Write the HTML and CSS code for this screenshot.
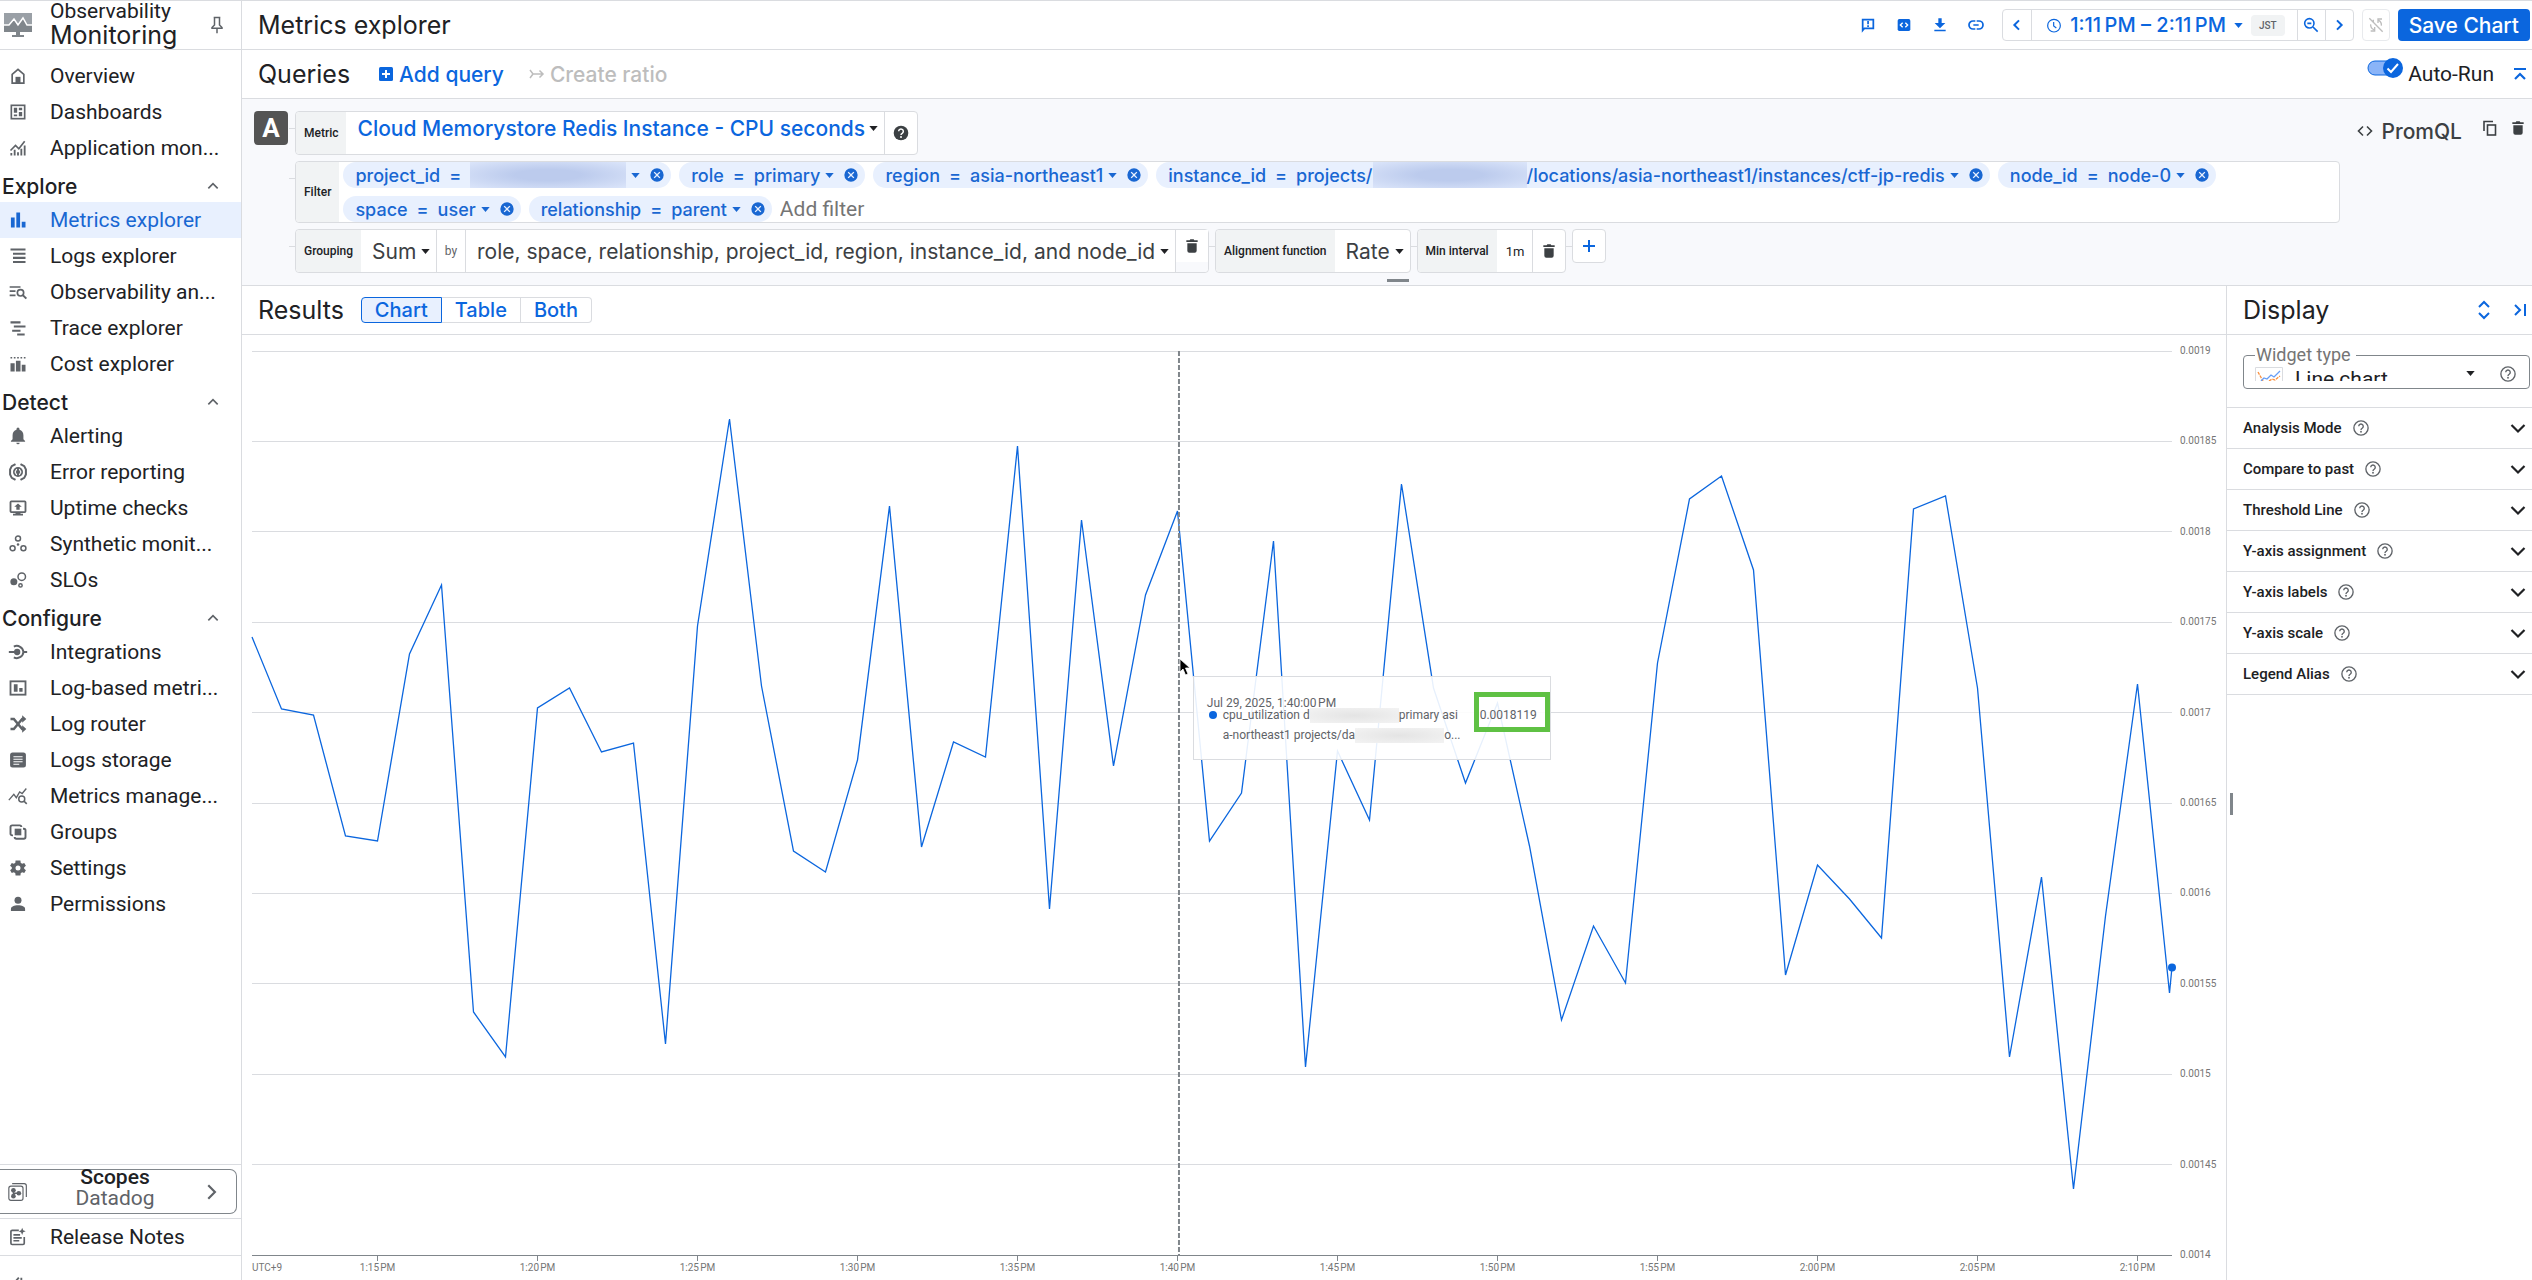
FILE: index.html
```html
<!DOCTYPE html>
<html lang="en">
<head>
    <meta charset="UTF-8">
    <meta name="viewport" content="width=device-width, initial-scale=1.0">
    <title>Metrics explorer - Monitoring</title>
    <link rel="stylesheet" href="styles.css">
</head>
<body>
    <!-- Shared icons -->
    <svg class="sprite" aria-hidden="true">
        <symbol id="i-caret" viewBox="0 0 10 6"><path d="M0 0h10L5 6z"/></symbol>
        <symbol id="i-up" viewBox="0 0 24 24"><path d="M5 15.500l7-7 7 7" fill="none" stroke="currentColor" stroke-width="2.500"/></symbol>
        <symbol id="i-down" viewBox="0 0 24 24"><path d="M5.500 9l6.500 6.500L18.500 9" fill="none" stroke="currentColor" stroke-width="2.200"/></symbol>
        <symbol id="i-left" viewBox="0 0 24 24"><path d="M15 5l-7 7 7 7" fill="none" stroke="currentColor" stroke-width="3"/></symbol>
        <symbol id="i-right" viewBox="0 0 24 24"><path d="M9 5l7 7-7 7" fill="none" stroke="currentColor" stroke-width="3"/></symbol>
        <symbol id="i-clear" viewBox="0 0 24 24"><path d="M12 2a10 10 0 1 0 0 20 10 10 0 0 0 0-20zm5 13.600L15.600 17 12 13.400 8.400 17 7 15.600l3.600-3.600L7 8.400 8.400 7l3.600 3.600L15.600 7 17 8.400 13.400 12z"/></symbol>
        <symbol id="i-trash" viewBox="0 0 24 24"><path d="M5 8h14v11a3 3 0 0 1-3 3H8a3 3 0 0 1-3-3zM15.500 3.500l-1-1.500h-5l-1 1.500H3.500V6h17V3.500z"/></symbol>
        <symbol id="i-help" viewBox="0 0 24 24"><circle cx="12" cy="12" r="9.500" fill="none" stroke="currentColor" stroke-width="1.800"/><path d="M9 9.800a3 3 0 1 1 4.600 2.500c-1 .7-1.600 1.200-1.600 2.300" fill="none" stroke="currentColor" stroke-width="1.800"/><circle cx="12" cy="17" r="1.200"/></symbol>
    </svg>

    <nav class="sidebar">
        <div class="sidebar-header">
            <svg class="product-icon" viewBox="0 0 28 26"><path d="M0 1h28v19H0z" fill="#9aa0a6"/><path d="M0 13h5l5-6 4 6 5-7 4 7h5v7H0z" fill="#80868b"/><path d="M0 13h5l5-6 4 6 5-7 4 7h5" fill="none" stroke="#fff" stroke-width="1.500"/><path d="M12 20h4v3h4v2H8v-2h4z" fill="#80868b"/></svg>
            <div class="product">
                <span class="product-parent">Observability</span>
                <span class="product-name">Monitoring</span>
            </div>
            <button class="icon-button pin" aria-label="Pin"><svg class="icon" viewBox="0 0 24 24"><path d="M8 3h8M9 3v9l-3 3v1h12v-1l-3-3V3M12 16v6" fill="none" stroke="currentColor" stroke-width="1.800"/></svg></button>
        </div>

        <div class="menu">
            <a class="menu-item" href="#"><svg class="icon" viewBox="0 0 24 24"><path d="M5 20.500V10l7-6 7 6v10.500z" fill="none" stroke="currentColor" stroke-width="2"/><path d="M9 13h6v8H9z"/></svg><span>Overview</span></a>
            <a class="menu-item" href="#"><svg class="icon" viewBox="0 0 24 24"><rect x="4" y="4" width="16" height="16" fill="none" stroke="currentColor" stroke-width="2"/><path d="M7 7h4v6H7zM13 7h4v3h-4zM13 12h4v5h-4zM7 15h4v2H7z"/></svg><span>Dashboards</span></a>
            <a class="menu-item" href="#"><svg class="icon" viewBox="0 0 24 24"><path d="M3 15l6-6 4 4 7-9" fill="none" stroke="currentColor" stroke-width="2"/><path d="M4 21v-3M8 21v-7M12 21v-4M16 21v-8M20 21V9" stroke="currentColor" stroke-width="2.200"/></svg><span>Application mon...</span></a>

            <div class="menu-heading"><span>Explore</span><svg class="icon-small" viewBox="0 0 24 24"><use href="#i-up"/></svg></div>
            <a class="menu-item active" href="#"><svg class="icon" viewBox="0 0 24 24"><path d="M3.500 9H8v12H3.500zM10 3h4.500v18H10zM16.500 14H21v7h-4.500z"/></svg><span>Metrics explorer</span></a>
            <a class="menu-item" href="#"><svg class="icon" viewBox="0 0 24 24"><path d="M3 3h18v2.500H3zM6 8h15v2.500H6zM6 13h15v2.500H6zM6 18h15v2.500H6z"/></svg><span>Logs explorer</span></a>
            <a class="menu-item" href="#"><svg class="icon" viewBox="0 0 24 24"><path d="M2 6h13M2 11h7M2 16h7" stroke="currentColor" stroke-width="2"/><circle cx="15" cy="13" r="3.800" fill="none" stroke="currentColor" stroke-width="2"/><path d="M17.500 15.500L22 20" stroke="currentColor" stroke-width="2.400"/></svg><span>Observability an...</span></a>
            <a class="menu-item" href="#"><svg class="icon" viewBox="0 0 24 24"><path d="M3 4h12v2.500H3zM7 9h14v2.500H7zM5 14h10v2.500H5zM11 18.500h9V21h-9z"/></svg><span>Trace explorer</span></a>
            <a class="menu-item" href="#"><svg class="icon" viewBox="0 0 24 24"><path d="M3 4.500h18" stroke="currentColor" stroke-width="2" stroke-dasharray="2 2"/><path d="M3 11h5v10H3zM9.500 8h5.500v13H9.500zM16.500 13H21v8h-4.500z"/></svg><span>Cost explorer</span></a>

            <div class="menu-heading"><span>Detect</span><svg class="icon-small" viewBox="0 0 24 24"><use href="#i-up"/></svg></div>
            <a class="menu-item" href="#"><svg class="icon" viewBox="0 0 24 24"><path d="M12 22a2 2 0 0 0 2-2h-4a2 2 0 0 0 2 2zm6.500-6v-5c0-3.200-1.700-5.800-4.700-6.500V3.600a1.800 1.800 0 0 0-3.600 0v.9C7.200 5.200 5.500 7.800 5.500 11v5L3.500 18v1h17v-1z"/></svg><span>Alerting</span></a>
            <a class="menu-item" href="#"><svg class="icon" viewBox="0 0 24 24"><path d="M9 2.500L4.500 5 2.500 9v6l2 4L9 21.500M15 2.500L19.500 5l2 4v6l-2 4-4.500 2.500" fill="none" stroke="currentColor" stroke-width="2.400"/><circle cx="12" cy="12" r="6"/><path d="M10.500 8.500L8.500 12l2 3.500M13.500 8.500l2 3.500-2 3.500" fill="none" stroke="#fff" stroke-width="1.300"/></svg><span>Error reporting</span></a>
            <a class="menu-item" href="#"><svg class="icon" viewBox="0 0 24 24"><rect x="3" y="4" width="18" height="13" rx="1" fill="none" stroke="currentColor" stroke-width="2.200"/><path d="M12 6.500l4.500 4H14V14h-4v-3.500H7.500zM9 17h6v2h3v2H6v-2h3z"/></svg><span>Uptime checks</span></a>
            <a class="menu-item" href="#"><svg class="icon" viewBox="0 0 24 24"><g fill="none" stroke="currentColor" stroke-width="1.800"><circle cx="12" cy="5.500" r="3"/><circle cx="5.500" cy="17" r="3"/><circle cx="18.500" cy="17" r="3"/></g><circle cx="12" cy="12.500" r="1.500"/></svg><span>Synthetic monit...</span></a>
            <a class="menu-item" href="#"><svg class="icon" viewBox="0 0 24 24"><circle cx="7" cy="14" r="4.200"/><g fill="none" stroke="currentColor" stroke-width="1.800"><circle cx="16.500" cy="8" r="4.500"/><circle cx="15" cy="18.500" r="2"/></g></svg><span>SLOs</span></a>

            <div class="menu-heading"><span>Configure</span><svg class="icon-small" viewBox="0 0 24 24"><use href="#i-up"/></svg></div>
            <a class="menu-item" href="#"><svg class="icon" viewBox="0 0 24 24"><circle cx="11" cy="12" r="3.800"/><path d="M1 12h8M19 12h4M7 5.500a8 8 0 0 1 11.500 6.500A8 8 0 0 1 7 18.500" fill="none" stroke="currentColor" stroke-width="2.400"/></svg><span>Integrations</span></a>
            <a class="menu-item" href="#"><svg class="icon" viewBox="0 0 24 24"><rect x="3" y="4" width="18" height="16" fill="none" stroke="currentColor" stroke-width="2.200"/><path d="M7 7.500h4.500v9H7zM13.500 12h4v4.500h-4z"/></svg><span>Log-based metri...</span></a>
            <a class="menu-item" href="#"><svg class="icon" viewBox="0 0 24 24"><path d="M3 6h4l10 12h2M3 18h4L17 6h2" fill="none" stroke="currentColor" stroke-width="3"/><path d="M17 1.500L22 6l-5 4.500zM17 13.500l5 4.500-5 4.500z"/></svg><span>Log router</span></a>
            <a class="menu-item" href="#"><svg class="icon" viewBox="0 0 24 24"><rect x="2.500" y="3" width="19" height="18" rx="3"/><path d="M6.500 8h11M6.500 11h11M6.500 14h11M6.500 17h7" stroke="#fff" stroke-width="1.300"/></svg><span>Logs storage</span></a>
            <a class="menu-item" href="#"><svg class="icon" viewBox="0 0 24 24"><path d="M1 17l6-7 3 4 4-7 3 2 5-6" fill="none" stroke="currentColor" stroke-width="1.600"/><circle cx="16.500" cy="15.500" r="3.600" fill="none" stroke="currentColor" stroke-width="1.800"/><path d="M19 18l3.500 3.500" stroke="currentColor" stroke-width="2"/></svg><span>Metrics manage...</span></a>
            <a class="menu-item" href="#"><svg class="icon" viewBox="0 0 24 24"><path d="M6 16H5a2 2 0 0 1-2-2V6a2 2 0 0 1 2-2h9a2 2 0 0 1 2 2M18 8h1a2 2 0 0 1 2 2v8a2 2 0 0 1-2 2h-9a2 2 0 0 1-2-2" fill="none" stroke="currentColor" stroke-width="2.300"/><path d="M8 8h8v8H8z"/></svg><span>Groups</span></a>
            <a class="menu-item" href="#"><svg class="icon" viewBox="0 0 24 24"><path d="M19.400 13a7.500 7.500 0 0 0 0-2l2.100-1.600-2-3.500-2.500 1a7.300 7.300 0 0 0-1.700-1L14.900 3H9.100l-.4 2.900a7.300 7.300 0 0 0-1.700 1l-2.500-1-2 3.500L4.600 11a7.500 7.500 0 0 0 0 2l-2.100 1.600 2 3.500 2.500-1c.5.4 1.100.7 1.700 1l.4 2.900h5.800l.4-2.900c.6-.3 1.200-.6 1.700-1l2.500 1 2-3.500zM12 15a3 3 0 1 1 0-6 3 3 0 0 1 0 6z"/></svg><span>Settings</span></a>
            <a class="menu-item" href="#"><svg class="icon" viewBox="0 0 24 24"><circle cx="12" cy="7.500" r="4.200"/><path d="M3.500 20.500V18c0-3 4-4.500 8.500-4.500s8.500 1.500 8.500 4.500v2.500z"/></svg><span>Permissions</span></a>
        </div>

        <div class="sidebar-footer">
            <button class="scopes">
                <svg class="icon" viewBox="0 0 24 24"><g fill="none" stroke="currentColor" stroke-width="1.400"><rect x="1" y="5" width="17" height="17" rx="2.500"/><path d="M5 2h14.500A2.500 2.500 0 0 1 22 4.500V18"/></g><circle cx="6.500" cy="10" r="2.800"/><circle cx="6.500" cy="17" r="2.800"/><circle cx="13" cy="13.500" r="2.800"/><path d="M6.500 10v7M6.500 13.500H13" stroke="currentColor" stroke-width="1.600"/></svg>
                <span class="scopes-text"><b>Scopes</b><span>Datadog</span></span>
                <svg class="icon" viewBox="0 0 24 24"><path d="M7.500 4l8 8-8 8" fill="none" stroke="currentColor" stroke-width="2.600"/></svg>
            </button>
            <a class="menu-item release" href="#"><svg class="icon" viewBox="0 0 24 24"><path d="M13 4H5a1.500 1.500 0 0 0-1.500 1.500v14A1.500 1.500 0 0 0 5 21h13a1.500 1.500 0 0 0 1.500-1.500V12M6.500 9.500h8M6.500 13h10M6.500 16.500h7" fill="none" stroke="currentColor" stroke-width="2"/><path d="M17 1l1.200 3 3 1.200-3 1.200L17 9.500l-1.200-3-3-1.300 3-1.200z"/></svg><span>Release Notes</span></a>
            <button class="collapse" aria-label="Collapse menu"><svg class="icon" viewBox="0 0 24 24"><path d="M13 2l-8 9 8 9M16 2v18" fill="none" stroke="currentColor" stroke-width="2.200"/></svg></button>
        </div>
    </nav>

    <main class="main">
        <header class="bar page-header">
            <h1 class="title">Metrics explorer</h1>
            <div class="header-actions">
                <button class="icon-button blue" aria-label="Send feedback"><svg class="icon" viewBox="0 0 24 24"><path d="M4 20V4h16v13H6.500z" fill="none" stroke="currentColor" stroke-width="2.600"/><path d="M10.800 6h2.600v5h-2.600zM10.800 12.500h2.600V15h-2.600z"/></svg></button>
                <button class="icon-button blue" aria-label="Code"><svg class="icon" viewBox="0 0 24 24"><rect x="2.500" y="3" width="19" height="18" rx="2.500"/><path d="M10 8.500L6.500 12l3.500 3.500M14 8.500l3.500 3.500-3.500 3.500" fill="none" stroke="#fff" stroke-width="2"/></svg></button>
                <button class="icon-button blue" aria-label="Download"><svg class="icon" viewBox="0 0 24 24"><path d="M9.500 2h5v7H20l-8 8-8-8h5.500zM3.500 19h17v2.500h-17z"/></svg></button>
                <button class="icon-button blue" aria-label="Copy link"><svg class="icon" viewBox="0 0 24 24"><path d="M11 6H7.500a6 6 0 0 0 0 12H11M13 6h3.500a6 6 0 0 1 0 12H13M8 12h8" fill="none" stroke="currentColor" stroke-width="2.600"/></svg></button>
                <div class="time-range">
                    <button class="time-step" aria-label="Previous"><svg class="icon-small" viewBox="0 0 24 24"><use href="#i-left"/></svg></button>
                    <button class="time-value">
                        <svg class="icon-small" viewBox="0 0 24 24"><circle cx="12" cy="13" r="9.500" fill="none" stroke="currentColor" stroke-width="1.800"/><path d="M11.500 7.500v6l4 3" fill="none" stroke="currentColor" stroke-width="1.800"/></svg>
                        <span>1:11&#8239;PM – 2:11&#8239;PM</span>
                        <svg class="caret"><use href="#i-caret"/></svg>
                        <span class="zone">JST</span>
                    </button>
                    <button class="time-step" aria-label="Zoom out"><svg class="icon-small" viewBox="0 0 24 24"><circle cx="9.500" cy="9.500" r="7" fill="none" stroke="currentColor" stroke-width="2.400"/><path d="M15 15l7 7M6.500 9.500h6" stroke="currentColor" stroke-width="2.400"/></svg></button>
                    <button class="time-step" aria-label="Next"><svg class="icon-small" viewBox="0 0 24 24"><use href="#i-right"/></svg></button>
                </div>
                <button class="live" aria-label="Auto refresh" disabled><svg class="icon-small" viewBox="0 0 24 24"><path d="M2 2l20 20M4 11a8 8 0 0 0 5 8M4 21h6v-6M8 4v3M20 13a8 8 0 0 0-4-8M21 3h-6v6" fill="none" stroke="currentColor" stroke-width="2"/></svg></button>
                <button class="save">Save Chart</button>
            </div>
        </header>

        <section class="bar">
            <h2 class="title">Queries</h2>
            <button class="text-button add-query"><svg class="icon-small" viewBox="0 0 16 16"><rect x="1" y="1" width="14" height="14" rx="1.500"/><path d="M8 4v8M4 8h8" stroke="#fff" stroke-width="2"/></svg>Add query</button>
            <button class="text-button" disabled><svg class="icon-small" viewBox="0 0 16 16"><path d="M1 4l3 4h10M1 12l3-4M10.500 4.500L14 8l-3.500 3.500" fill="none" stroke="currentColor" stroke-width="1.500"/></svg>Create ratio</button>
            <div class="bar-end">
                <label class="auto-run">
                    <input type="checkbox" class="auto-run-input" checked>
                    <svg class="toggle" viewBox="0 0 36 20"><rect x="1" y="3" width="32" height="14" rx="7" fill="#8ab4f8" stroke="#0b66de"/><circle cx="26" cy="10" r="10" fill="#0b66de"/><path d="M20.500 10.500l3.500 3.500 7-8" fill="none" stroke="#fff" stroke-width="2"/></svg>
                    <span>Auto-Run</span>
                </label>
                <button class="icon-plain blue" aria-label="Collapse queries"><svg class="icon-small" viewBox="0 0 16 16"><path d="M2 3h12M3 13l5-5 5 5" fill="none" stroke="currentColor" stroke-width="2.200"/></svg></button>
            </div>
        </section>

        <section class="query">
            <div class="query-id">A</div>
            <div class="query-rows">
                <div class="query-row">
                    <div class="field">
                        <label class="field-label" for="metric">Metric</label>
                        <div class="field-value metric-value"><select id="metric" class="select blue medium"><option>Cloud Memorystore Redis Instance - CPU seconds</option></select><svg class="caret"><use href="#i-caret"/></svg></div>
                        <button class="field-cell" aria-label="Metric help"><svg class="icon-small" viewBox="0 0 24 24"><circle cx="12" cy="12" r="11"/><path d="M8.500 9.500a3.500 3.500 0 1 1 5.300 3c-1.100.7-1.800 1.200-1.800 2.500" fill="none" stroke="#fff" stroke-width="2.200"/><circle cx="12" cy="18" r="1.500" fill="#fff"/></svg></button>
                    </div>
                </div>

                <div class="query-row">
                    <div class="field filter">
                        <label class="field-label" for="filter">Filter</label>
                        <div class="chips">
                            <div class="chip"><button class="chip-main"><span>project_id</span><span>=</span><span class="redacted redacted-short"></span><svg class="caret"><use href="#i-caret"/></svg></button><button class="chip-clear" aria-label="Remove"><svg class="icon-small"><use href="#i-clear"/></svg></button></div>
                            <div class="chip"><button class="chip-main"><span>role</span><span>=</span><span>primary</span><svg class="caret"><use href="#i-caret"/></svg></button><button class="chip-clear" aria-label="Remove"><svg class="icon-small"><use href="#i-clear"/></svg></button></div>
                            <div class="chip"><button class="chip-main"><span>region</span><span>=</span><span>asia-northeast1</span><svg class="caret"><use href="#i-caret"/></svg></button><button class="chip-clear" aria-label="Remove"><svg class="icon-small"><use href="#i-clear"/></svg></button></div>
                            <div class="chip"><button class="chip-main"><span>instance_id</span><span>=</span><span class="chip-path">projects/<span class="redacted"></span>/locations/asia-northeast1/instances/ctf-jp-redis</span><svg class="caret"><use href="#i-caret"/></svg></button><button class="chip-clear" aria-label="Remove"><svg class="icon-small"><use href="#i-clear"/></svg></button></div>
                            <div class="chip"><button class="chip-main"><span>node_id</span><span>=</span><span>node-0</span><svg class="caret"><use href="#i-caret"/></svg></button><button class="chip-clear" aria-label="Remove"><svg class="icon-small"><use href="#i-clear"/></svg></button></div>
                            <div class="chip"><button class="chip-main"><span>space</span><span>=</span><span>user</span><svg class="caret"><use href="#i-caret"/></svg></button><button class="chip-clear" aria-label="Remove"><svg class="icon-small"><use href="#i-clear"/></svg></button></div>
                            <div class="chip"><button class="chip-main"><span>relationship</span><span>=</span><span>parent</span><svg class="caret"><use href="#i-caret"/></svg></button><button class="chip-clear" aria-label="Remove"><svg class="icon-small"><use href="#i-clear"/></svg></button></div>
                            <input id="filter" class="filter-input" type="text" placeholder="Add filter">
                        </div>
                    </div>
                </div>

                <div class="query-row">
                    <div class="field">
                        <label class="field-label" for="grouping">Grouping</label>
                        <div class="field-value"><select id="grouping" class="select"><option>Sum</option></select><svg class="caret"><use href="#i-caret"/></svg></div>
                        <label class="field-cell by" for="group-by">by</label>
                        <div class="field-value group-by"><select id="group-by" class="select"><option>role, space, relationship, project_id, region, instance_id, and node_id</option></select><svg class="caret"><use href="#i-caret"/></svg></div>
                        <div class="field-cell short-cell"><button class="field-trash" aria-label="Delete grouping"><svg class="icon-small"><use href="#i-trash"/></svg></button></div>
                    </div>
                    <div class="field">
                        <label class="field-label" for="alignment">Alignment function</label>
                        <div class="field-value"><select id="alignment" class="select"><option>Rate</option></select><svg class="caret"><use href="#i-caret"/></svg></div>
                    </div>
                    <div class="field">
                        <label class="field-label" for="interval">Min interval</label>
                        <input id="interval" class="interval" type="text" value="1m">
                        <button class="field-cell" aria-label="Delete interval"><svg class="icon-small"><use href="#i-trash"/></svg></button>
                    </div>
                    <button class="field add-field blue" aria-label="Add element"><svg class="icon-small" viewBox="0 0 16 16"><path d="M8 2v12M2 8h12" stroke="currentColor" stroke-width="2"/></svg></button>
                </div>
            </div>
            <div class="query-actions">
                <button class="text-button promql"><svg class="icon-small" viewBox="0 0 16 16"><path d="M6 3.500L1.500 8 6 12.500M10 3.500L14.500 8 10 12.500" fill="none" stroke="currentColor" stroke-width="1.600"/></svg>PromQL</button>
                <button class="icon-plain" aria-label="Duplicate"><svg class="icon-small" viewBox="0 0 16 16"><path d="M2 11V1.500h9" fill="none" stroke="currentColor" stroke-width="1.600"/><rect x="5.500" y="5" width="8" height="10" fill="none" stroke="currentColor" stroke-width="1.600"/></svg></button>
                <button class="icon-plain" aria-label="Delete query"><svg class="icon-small"><use href="#i-trash"/></svg></button>
            </div>
            <div class="drag-handle"></div>
        </section>

        <div class="lower">
            <section class="results">
                <div class="bar">
                    <h2 class="title">Results</h2>
                    <div class="segmented">
                        <button class="segment selected">Chart</button>
                        <button class="segment">Table</button>
                        <button class="segment">Both</button>
                    </div>
                </div>
                <div class="chart">
                    <svg class="plot">
                        <g class="grid">
                            <line x1="0" x2="100%" y1="0" y2="0"/>
                            <line x1="0" x2="100%" y1="10%" y2="10%"/>
                            <line x1="0" x2="100%" y1="20%" y2="20%"/>
                            <line x1="0" x2="100%" y1="30%" y2="30%"/>
                            <line x1="0" x2="100%" y1="40%" y2="40%"/>
                            <line x1="0" x2="100%" y1="50%" y2="50%"/>
                            <line x1="0" x2="100%" y1="60%" y2="60%"/>
                            <line x1="0" x2="100%" y1="70%" y2="70%"/>
                            <line x1="0" x2="100%" y1="80%" y2="80%"/>
                            <line x1="0" x2="100%" y1="90%" y2="90%"/>
                            <line class="axis" x1="0" x2="100%" y1="100%" y2="100%"/>
                        </g>
                        <g class="labels">
                            <text x="100%" y="0" dx="8" dy="3">0.0019</text>
                            <text x="100%" y="10%" dx="8" dy="3">0.00185</text>
                            <text x="100%" y="20%" dx="8" dy="3">0.0018</text>
                            <text x="100%" y="30%" dx="8" dy="3">0.00175</text>
                            <text x="100%" y="40%" dx="8" dy="3">0.0017</text>
                            <text x="100%" y="50%" dx="8" dy="3">0.00165</text>
                            <text x="100%" y="60%" dx="8" dy="3">0.0016</text>
                            <text x="100%" y="70%" dx="8" dy="3">0.00155</text>
                            <text x="100%" y="80%" dx="8" dy="3">0.0015</text>
                            <text x="100%" y="90%" dx="8" dy="3">0.00145</text>
                            <text x="100%" y="100%" dx="8" dy="3">0.0014</text>
                            <text x="0" y="100%" dy="16">UTC+9</text>
                        </g>
                        <g class="labels time-labels">
                            <text x="6.54%" y="100%" dy="16">1:15&#8239;PM</text>
                            <text x="14.87%" y="100%" dy="16">1:20&#8239;PM</text>
                            <text x="23.2%" y="100%" dy="16">1:25&#8239;PM</text>
                            <text x="31.54%" y="100%" dy="16">1:30&#8239;PM</text>
                            <text x="39.87%" y="100%" dy="16">1:35&#8239;PM</text>
                            <text x="48.2%" y="100%" dy="16">1:40&#8239;PM</text>
                            <text x="56.54%" y="100%" dy="16">1:45&#8239;PM</text>
                            <text x="64.87%" y="100%" dy="16">1:50&#8239;PM</text>
                            <text x="73.2%" y="100%" dy="16">1:55&#8239;PM</text>
                            <text x="81.54%" y="100%" dy="16">2:00&#8239;PM</text>
                            <text x="89.87%" y="100%" dy="16">2:05&#8239;PM</text>
                            <text x="98.2%" y="100%" dy="16">2:10&#8239;PM</text>
                        </g>
                        <svg class="series" viewBox="0 0 1920 904" preserveAspectRatio="none">
                            <path class="ticks" d="M125.500 904v6M285.500 904v6M445.500 904v6M605.500 904v6M765.500 904v6M925.500 904v6M1085.500 904v6M1245.500 904v6M1405.500 904v6M1565.500 904v6M1725.500 904v6M1885.500 904v6"/>
                            <polyline class="series-line" points="0,286 29.5,358 61.5,364 93.5,485 125.5,490 157.5,303 189.5,234 221.5,661 253.5,706 285.5,357 317.5,337 349.5,401 381.5,392 413.5,693 445.5,275 477.5,68 509.5,335 541.5,500 573.5,521 605.5,409 637.5,155 669.5,496 701.5,391 733.5,406 765.5,95 797.5,558 829.5,169 861.5,415 893.5,244 925.5,160 957.5,490 989.5,442 1021.5,190 1053.5,716 1085.5,400 1117.5,469 1149.5,133 1181.5,337 1213.5,432 1245.5,352 1277.5,495 1309.5,669 1341.5,575 1373.5,632 1405.5,312 1437.5,148 1469.5,125 1501.5,219 1533.5,624 1565.5,514 1597.5,548 1629.5,587 1661.5,158 1693.5,145 1725.5,337 1757.5,706 1789.5,526 1821.5,838 1853.5,565 1885.5,333 1917.5,642 1920,616"/>
                        </svg>
                        <circle class="series-dot" cx="100%" cy="68.2%" r="4"/>
                        <line class="crosshair" x1="48.28%" x2="48.28%" y1="0" y2="100%"/>
                    </svg>

                    <div class="tooltip">
                        <div class="tooltip-date">Jul 29, 2025, 1:40:00&#8239;PM</div>
                        <div class="tooltip-row">
                            <span class="tooltip-dot"></span>
                            <div class="tooltip-name">
                                <div class="tooltip-line">cpu_utilization d<span class="smudge"></span>primary asi</div>
                                <div class="tooltip-line">a-northeast1 projects/da<span class="smudge"></span>o...</div>
                            </div>
                            <span>0.0018119</span>
                        </div>
                        <div class="callout"></div>
                    </div>
                    <svg class="cursor" viewBox="0 0 12 18"><path d="M1 1v13l3-3 2.500 6 2.500-1-2.500-6H11z" stroke="#fff" stroke-width=".8"/></svg>
                </div>
            </section>

            <aside class="display">
                <div class="bar display-bar">
                    <h2 class="title">Display</h2>
                    <div class="bar-end">
                        <button class="icon-plain blue" aria-label="Expand all"><svg class="icon" viewBox="0 0 20 20"><path d="M5 7l5-5 5 5M5 13l5 5 5-5" fill="none" stroke="currentColor" stroke-width="2"/></svg></button>
                        <button class="icon-plain blue" aria-label="Hide panel"><svg class="icon-small" viewBox="0 0 16 16"><path d="M3 3l5 5-5 5M13 2v12" fill="none" stroke="currentColor" stroke-width="2"/></svg></button>
                    </div>
                </div>
                <div class="widget-area">
                    <fieldset class="widget">
                        <legend class="widget-legend"><label for="widget-type">Widget type</label></legend>
                        <div class="widget-value">
                            <svg class="widget-thumb" viewBox="0 0 28 14"><path d="M.5 14V.5h27V14" fill="none" stroke="#dadce0"/><path d="M3 5l5 9M14 14l3-2 3 1 5-4" fill="none" stroke="#fa903e" stroke-width="1.300" stroke-dasharray="3 1"/><path d="M6 14l3-3 3 1 4-4 3 2 6-6" fill="none" stroke="#669df6" stroke-width="1.300"/></svg>
                            <select id="widget-type" class="select widget-select"><option>Line chart</option></select>
                        </div>
                        <svg class="caret"><use href="#i-caret"/></svg>
                        <svg class="help"><use href="#i-help"/></svg>
                    </fieldset>
                </div>
                <button class="option">Analysis Mode<svg class="help"><use href="#i-help"/></svg><svg class="chevron"><use href="#i-down"/></svg></button>
                <button class="option">Compare to past<svg class="help"><use href="#i-help"/></svg><svg class="chevron"><use href="#i-down"/></svg></button>
                <button class="option">Threshold Line<svg class="help"><use href="#i-help"/></svg><svg class="chevron"><use href="#i-down"/></svg></button>
                <button class="option">Y-axis assignment<svg class="help"><use href="#i-help"/></svg><svg class="chevron"><use href="#i-down"/></svg></button>
                <button class="option">Y-axis labels<svg class="help"><use href="#i-help"/></svg><svg class="chevron"><use href="#i-down"/></svg></button>
                <button class="option">Y-axis scale<svg class="help"><use href="#i-help"/></svg><svg class="chevron"><use href="#i-down"/></svg></button>
                <button class="option">Legend Alias<svg class="help"><use href="#i-help"/></svg><svg class="chevron"><use href="#i-down"/></svg></button>
                <div class="side-handle"></div>
            </aside>
        </div>
    </main>
</body>
</html>
```
FILE: styles.css
```css
:root {
    --blue: #0b66de;
    --text: #202124;
    --muted: #5f6368;
    --line: #dadce0;
    --heading-font: Inter, "Open Sans", sans-serif;
    --body-font: Roboto, "Liberation Sans", sans-serif;
}

* {
    margin: 0;
    padding: 0;
    box-sizing: border-box;
}

body {
    display: flex;
    height: 100vh;
    overflow: hidden;
    border-top: 1px solid var(--line);
    font-family: var(--body-font);
    font-size: 21px;
    color: var(--text);
    background-color: #fff;
}

button,
select,
input {
    font: inherit;
    color: inherit;
    border: none;
    background: none;
    outline: none;
}

button {
    cursor: pointer;
}

svg {
    flex: none;
    fill: currentColor;
}

.sprite {
    display: none;
}

.icon {
    width: 20px;
    height: 20px;
}

.icon-small {
    width: 16px;
    height: 16px;
}

.caret {
    width: 9px;
    height: 5px;
}

.blue {
    color: var(--blue);
}

/* Sidebar */
.sidebar {
    display: flex;
    flex-direction: column;
    flex: none;
    width: 242px;
    border-right: 1px solid var(--line);
}

.sidebar-header {
    display: flex;
    align-items: center;
    height: 49px;
    padding: 0 14px 0 4px;
    border-bottom: 1px solid var(--line);
}

.product-icon {
    width: 28px;
    height: 26px;
    margin-right: 18px;
}

.product {
    display: flex;
    flex-direction: column;
    flex: 1;
}

.product-parent {
    line-height: 20px;
}

.product-name {
    font-family: var(--heading-font);
    font-size: 25px;
    line-height: 28px;
}

.icon-button {
    display: flex;
    align-items: center;
    justify-content: center;
    width: 36px;
    height: 36px;
}

.header-actions .icon-button .icon {
    width: 16px;
    height: 16px;
}

.pin {
    width: 20px;
    color: var(--muted);
}

.menu {
    flex: 1;
    padding-top: 8px;
}

.menu-item {
    display: flex;
    align-items: center;
    gap: 22px;
    height: 36px;
    padding-left: 8px;
    color: var(--text);
    text-decoration: none;
    white-space: nowrap;
}

.menu-item .icon {
    color: var(--muted);
}

.menu-item.active {
    color: #1967d2;
    background-color: #e8f0fe;
}

.menu-item.active .icon {
    color: #1967d2;
}

.menu-heading {
    display: flex;
    align-items: center;
    justify-content: space-between;
    height: 36px;
    padding: 4px 20px 0 2px;
    font-family: var(--heading-font);
    font-weight: 500;
}

.menu-heading .icon-small {
    color: var(--muted);
}

.sidebar-footer {
    border-top: 1px solid var(--line);
    padding-top: 4px;
}

.scopes {
    display: flex;
    align-items: center;
    width: 237px;
    height: 45px;
    padding: 0 14px 0 8px;
    border: 1px solid #80868b;
    border-left: none;
    border-radius: 0 7px 7px 0;
    color: var(--muted);
}

.scopes-text {
    display: flex;
    flex-direction: column;
    flex: 1;
    padding-bottom: 8px;
    line-height: 21px;
}

.scopes-text b {
    font-weight: 500;
    color: var(--text);
}

.release {
    height: 38px;
    margin-top: 4px;
    border-top: 1px solid var(--line);
    border-bottom: 1px solid var(--line);
}

.collapse {
    display: block;
    height: 24px;
    padding: 20px 8px 0;
    overflow: hidden;
    color: var(--muted);
}

/* Page bars */
.main {
    display: flex;
    flex-direction: column;
    flex: 1;
    min-width: 0;
}

.bar {
    display: flex;
    align-items: center;
    flex: none;
    height: 49px;
    padding-left: 16px;
    border-bottom: 1px solid var(--line);
}

.title {
    font-family: var(--heading-font);
    font-size: 25px;
    font-weight: 400;
}

.header-actions {
    display: flex;
    align-items: center;
    margin-left: auto;
    padding-right: 2px;
}

.time-range {
    display: flex;
    height: 32px;
    margin: 0 8px;
    border: 1px solid var(--line);
    border-radius: 4px;
    color: var(--blue);
}

.time-step,
.time-value {
    display: flex;
    align-items: center;
    justify-content: center;
}

.time-step {
    width: 28px;
}

.time-step + .time-value,
.time-value + .time-step,
.time-step + .time-step {
    border-left: 1px solid var(--line);
}

.time-value {
    gap: 8px;
    padding: 0 12px 0 14px;
    font-family: var(--heading-font);
    font-size: 20px;
    font-weight: 500;
}

.zone {
    padding: 0 8px;
    border-radius: 4px;
    font-family: var(--body-font);
    font-size: 10px;
    line-height: 21px;
    color: var(--muted);
    background-color: #f1f3f4;
}

.live {
    display: flex;
    align-items: center;
    justify-content: center;
    width: 28px;
    height: 32px;
    border: 1px solid #e8eaed;
    border-radius: 4px;
    color: #bdbdbd;
}

.save {
    height: 32px;
    margin-left: 8px;
    padding: 0 11px;
    border-radius: 4px;
    font-family: var(--heading-font);
    font-weight: 500;
    color: #fff;
    background-color: var(--blue);
}

.text-button {
    display: flex;
    align-items: center;
    gap: 5px;
    font-family: var(--heading-font);
    font-weight: 500;
    color: var(--blue);
}

.text-button:disabled {
    color: #bdbdbd;
}

.add-query {
    margin: 0 25px 0 28px;
}

.bar-end {
    display: flex;
    align-items: center;
    gap: 18px;
    margin-left: auto;
    padding-right: 4px;
}

.auto-run {
    display: flex;
    align-items: center;
    gap: 5px;
}

.auto-run-input {
    position: absolute;
    opacity: 0;
}

.toggle {
    width: 36px;
    height: 32px;
    padding-bottom: 12px;
}

.icon-plain {
    display: flex;
}

/* Query builder */
.query {
    position: relative;
    display: flex;
    flex: none;
    padding: 12px 6px 12px 12px;
    border-bottom: 1px solid var(--line);
    background-color: #f8f9fc;
}

.query-id {
    width: 34px;
    height: 34px;
    margin-right: 7px;
    border-radius: 4px;
    font-size: 26px;
    font-weight: 700;
    line-height: 34px;
    text-align: center;
    color: #fff;
    background-color: #545454;
}

.query-rows {
    display: flex;
    flex-direction: column;
    flex: 1;
    gap: 6px;
    min-width: 0;
}

.query-row {
    display: flex;
    gap: 6px;
}

.field {
    position: relative;
    display: flex;
    min-height: 44px;
    border: 1px solid var(--line);
    border-radius: 4px;
    background-color: #fff;
}

/* connector to the element on the left */
.field::before {
    content: "";
    position: absolute;
    top: 16px;
    left: -7px;
    width: 6px;
    height: 1px;
    background-color: var(--line);
}

.field-label {
    display: flex;
    align-items: center;
    padding: 0 8px;
    border-radius: 4px 0 0 4px;
    font-size: 12px;
    font-weight: 500;
    background-color: #f1f3f4;
}

.field-value {
    display: flex;
    align-items: center;
    gap: 4px;
    padding: 0 6px 0 11px;
}

.metric-value {
    height: 32px;
}

.select {
    appearance: none;
    font-family: var(--heading-font);
    color: #3c4043;
    cursor: pointer;
}

.select.blue {
    color: var(--blue);
}

.medium {
    font-weight: 500;
}

.field-cell {
    display: flex;
    align-items: center;
    justify-content: center;
    width: 33px;
    border-left: 1px solid var(--line);
    color: #3c4043;
}

.by {
    width: 29px;
    font-size: 12px;
    color: var(--muted);
}

.group-by {
    border-left: 1px solid var(--line);
}

.short-cell {
    align-items: flex-start;
    border-radius: 0 4px 4px 0;
    background-color: #f8f9fc;
}

.field-trash {
    display: flex;
    align-items: center;
    justify-content: center;
    flex: 1;
    height: 32px;
    background-color: #fff;
}

.interval {
    width: 35px;
    padding-left: 9px;
    font-size: 13px;
}

.add-field {
    align-items: center;
    justify-content: center;
    width: 34px;
    min-height: 34px;
    height: 34px;
}

.filter {
    flex: 1;
    min-height: 62px;
}

.chips {
    display: flex;
    flex-wrap: wrap;
    align-content: flex-start;
    gap: 8px;
    padding-left: 4px;
}

.chip {
    display: flex;
    align-items: center;
    height: 26px;
    padding: 0 6px 0 12px;
    border-radius: 13px;
    font-family: var(--heading-font);
    font-size: 18px;
    font-weight: 500;
    color: #1967d2;
    background-color: #e8f0fe;
}

.chip-main {
    display: flex;
    align-items: center;
    gap: 9px;
}

.chip-main .caret {
    margin-left: -4px;
}

.chip-clear {
    display: flex;
    margin-left: 9px;
}

.chip-path {
    display: flex;
    align-items: center;
}

.redacted {
    width: 154px;
    height: 26px;
    background: radial-gradient(farthest-corner, #bccbed 30%, #dbe5fa);
}

.redacted-short {
    width: 156px;
}

.filter-input {
    width: 240px;
    height: 26px;
}

.filter-input::placeholder {
    color: #757575;
}

.query-actions {
    display: flex;
    align-items: flex-start;
    padding-left: 17px;
    gap: 12px;
}

.query-actions .icon-plain {
    padding: 9px 0 0;
    color: #3c4043;
}

.promql {
    gap: 8px;
    height: 40px;
    margin-right: 8px;
    color: #3c4043;
}

.drag-handle {
    position: absolute;
    left: 50%;
    bottom: 3px;
    width: 22px;
    height: 3px;
    background-color: #80868b;
}

/* Results */
.lower {
    display: flex;
    flex: 1;
    min-height: 0;
}

.results {
    display: flex;
    flex-direction: column;
    flex: 1;
    min-width: 0;
}

.segmented {
    display: flex;
    margin-left: 17px;
}

.segment {
    height: 26px;
    padding: 0 13px;
    border: 1px solid var(--line);
    border-left: none;
    font-family: var(--heading-font);
    font-size: 20px;
    font-weight: 500;
    line-height: 24px;
    color: var(--blue);
}

.segment.selected {
    border: 1px solid var(--blue);
    border-radius: 4px 0 0 4px;
    background-color: #e8f0fe;
}

.segment:last-child {
    border-radius: 0 4px 4px 0;
}

.chart {
    position: relative;
    flex: 1;
    min-height: 0;
    margin: 16px 54px 25px 10px;
}

.plot {
    display: block;
    width: 100%;
    height: 100%;
    overflow: visible;
}

.series {
    overflow: visible;
}

.grid line {
    stroke: var(--line);
    shape-rendering: crispEdges;
}

.grid .axis,
.ticks {
    stroke: #80868b;
    vector-effect: non-scaling-stroke;
}

.labels {
    font-size: 10px;
    fill: #757575;
}

.time-labels {
    text-anchor: middle;
}

.series-line {
    fill: none;
    stroke: var(--blue);
    stroke-width: 1.3px;
    vector-effect: non-scaling-stroke;
}

.series-dot {
    fill: var(--blue);
}

.crosshair {
    stroke: #80868b;
    stroke-width: 2px;
    stroke-dasharray: 5 2;
}

.tooltip {
    position: absolute;
    left: 49%;
    top: 36%;
    width: 358px;
    height: 84px;
    padding: 20px 13px;
    border: 1px solid var(--line);
    font-size: 12px;
    line-height: 12px;
    color: var(--muted);
    background-color: rgba(255, 255, 255, 0.9);
}

.tooltip-row {
    display: flex;
}

.tooltip-dot {
    width: 8px;
    height: 8px;
    margin: 2px 6px 0 2px;
    border-radius: 50%;
    background-color: var(--blue);
}

.tooltip-name {
    display: flex;
    flex-direction: column;
    gap: 8px;
    width: 258px;
}

.tooltip-line {
    display: flex;
    align-items: center;
    height: 12px;
}

.smudge {
    width: 89px;
    height: 15px;
    background: radial-gradient(farthest-corner, #e4e4e4, #f3f3f3);
}

/* marks the hovered value */
.callout {
    position: absolute;
    top: 15px;
    right: 0;
    width: 76px;
    height: 40px;
    border: 5px solid #5fc144;
}

.cursor {
    position: absolute;
    left: 48.3%;
    top: 34%;
    width: 12px;
    height: 18px;
    fill: #000;
}

/* Display panel */
.display {
    position: relative;
    flex: none;
    width: 306px;
    border-left: 1px solid var(--line);
}

.display-bar .bar-end {
    gap: 18px;
}

.widget-area {
    height: 73px;
    padding: 10px 2px 0 16px;
    border-bottom: 1px solid var(--line);
}

.widget {
    display: flex;
    align-items: center;
    height: 44px;
    padding: 0 12px 6px 11px;
    border: 1px solid #80868b;
    border-radius: 4px;
}

.widget-legend {
    padding: 0 5px 0 1px;
    font-size: 18px;
    line-height: 20px;
    color: #757575;
}

.widget-value {
    display: flex;
    align-items: flex-start;
    flex: 1;
    gap: 12px;
    height: 14px;
    overflow: hidden;
}

.widget-thumb {
    width: 28px;
    height: 14px;
}

.widget-select {
    flex: 1;
    height: 20px;
    font-family: var(--body-font);
    color: var(--text);
}

.help {
    width: 18px;
    height: 18px;
    color: var(--muted);
}

.widget .help {
    margin-left: 24px;
}

.option {
    display: flex;
    align-items: center;
    width: 100%;
    height: 41px;
    padding: 0 2px 0 16px;
    border-bottom: 1px solid var(--line);
    font-size: 15px;
    font-weight: 500;
}

.option .help {
    margin-left: 10px;
}

.chevron {
    width: 24px;
    height: 24px;
    margin-left: auto;
}

.side-handle {
    position: absolute;
    left: 3px;
    top: 51%;
    width: 3px;
    height: 22px;
    background-color: #80868b;
}
```
